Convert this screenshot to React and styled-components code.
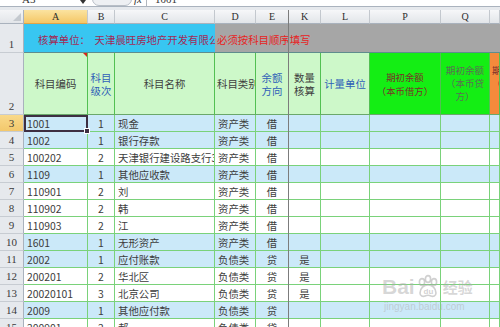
import React from 'react';
import styled, { createGlobalStyle, css } from 'styled-components';

const GlobalStyle = createGlobalStyle`
  html, body {
    margin: 0;
    padding: 0;
    background: #fff;
    overflow: hidden;
  }
  body {
    font-family: "Noto Sans CJK SC", "Liberation Sans", sans-serif;
  }
`;

const Page = styled.div`
  width: 500px;
  height: 327px;
  overflow: hidden;
  position: relative;
`;

const FormulaBar = styled.div`
  height: 6px;
  display: flex;
  align-items: flex-end;
  overflow: hidden;
  background: #fff;
  border-bottom: 1px solid #aab3be;
  font-size: 11px;
  color: #333;
`;

const NameBox = styled.div`
  width: 76px;
  padding-left: 22px;
  box-sizing: border-box;
  line-height: 13px;
  font-family: "Liberation Serif", serif;
`;

const DropArrow = styled.div`
  width: 0;
  height: 0;
  margin: 0 6px 2px 4px;
  border-left: 3px solid transparent;
  border-right: 3px solid transparent;
  border-top: 4px solid #333;
`;

const Knob = styled.div`
  width: 38px;
  height: 14px;
  border-radius: 7px;
  border: 1px solid #b8bec6;
  background: #eef0f3;
`;

const FxLabel = styled.div`
  width: 12px;
  padding-left: 2px;
  line-height: 13px;
  font-style: italic;
  font-family: "Liberation Serif", serif;
  border-right: 1px solid #b0b6be;
  margin-right: 8px;
`;

const FormulaText = styled.div`
  line-height: 13px;
  font-family: "Liberation Serif", serif;
`;

const Strip = styled.div`
  height: 3px;
  background: #e6e9ed;
`;

const Sheet = styled.div`
  position: relative;
  display: grid;
  grid-template-columns: 24px 64px 27px 100px 41px 33px 32px 49px 71px 49px 10px;
  grid-template-rows: 14px 29px 62px;
  grid-auto-rows: 17px;
  width: 500px;
`;

const Corner = styled.div`
  position: relative;
  box-sizing: border-box;
  background: linear-gradient(#f4f5f7, #e2e5e9);
  border-right: 1px solid #a9b2bd;
  border-bottom: 1px solid #a9b2bd;

  &::after {
    content: '';
    position: absolute;
    right: 2px;
    bottom: 2px;
    border-left: 8px solid transparent;
    border-bottom: 8px solid #c4c9cf;
  }
`;

const ColHead = styled.div`
  box-sizing: border-box;
  display: flex;
  align-items: center;
  justify-content: center;
  font-family: "Liberation Serif", serif;
  font-size: 10px;
  color: #2d2d2d;
  background: ${p => (p.$active ? 'linear-gradient(#fbe3a0, #f4c766)' : 'linear-gradient(#f6f7f9, #e2e5e9)')};
  border-right: 1px solid #c3c8ce;
  border-bottom: 1px solid ${p => (p.$active ? '#e0a448' : '#a9b2bd')};
`;

const RowHead = styled.div`
  box-sizing: border-box;
  display: flex;
  align-items: flex-end;
  justify-content: center;
  padding-bottom: 1px;
  line-height: 13px;
  font-family: "Liberation Serif", serif;
  font-size: 11px;
  color: #3a3a3a;
  background: ${p => (p.$active ? 'linear-gradient(#f9d98a, #f3c86c)' : '#e6e9ed')};
  border-right: 1px solid #a9b2bd;
  border-bottom: 1px solid #c7ccd2;
`;

const Banner = styled.div`
  grid-column: span ${p => p.$span};
  box-sizing: border-box;
  display: flex;
  align-items: center;
  padding: 2px 0 0 ${p => p.$pad}px;
  background: ${p => p.$bg};
  color: ${p => p.$color};
  font-size: 10.4px;
  white-space: pre;
  overflow: hidden;
  border-bottom: 1px solid #5f8d8d;
`;

const HeadCell = styled.div`
  position: relative;
  box-sizing: border-box;
  display: flex;
  align-items: center;
  justify-content: ${p => (p.$left ? 'flex-start' : 'center')};
  padding-left: ${p => (p.$left ? 2 : 0)}px;
  text-align: center;
  line-height: ${p => p.$lh || 13}px;
  font-size: ${p => p.$fs || 10.4}px;
  color: ${p => p.$color || '#404040'};
  background: ${p => p.$bg || '#cdf8c9'};
  border-right: 1px solid #52c052;
  border-bottom: 1px solid #6aa86a;
  white-space: nowrap;
  overflow: hidden;

  ${p => p.$note && css`
    &::after {
      content: '';
      position: absolute;
      top: 0;
      right: 0;
      border-left: 4px solid transparent;
      border-top: 4px solid #d8261c;
    }
  `}
`;

const Cell = styled.div`
  position: relative;
  box-sizing: border-box;
  display: flex;
  align-items: center;
  justify-content: ${p => (p.$center ? 'center' : 'flex-start')};
  padding-left: ${p => (p.$center ? 0 : 3)}px;
  font-size: 10.4px;
  color: #3c3c3c;
  background: ${p => (p.$blue ? '#cbe9f9' : '#fff')};
  border-right: 1px solid #7ad27a;
  border-bottom: 1px solid #7ad27a;
  white-space: nowrap;
  overflow: hidden;

  ${p => p.$selected && css`
    outline: 2px solid #3d2f42;
    outline-offset: -2px;
    overflow: visible;

    &::after {
      content: '';
      position: absolute;
      right: -3px;
      bottom: -3px;
      width: 4px;
      height: 4px;
      background: #3d2f42;
      border: 1px solid #fff;
      z-index: 2;
    }
  `}
`;

const FreezeLine = styled.div`
  position: absolute;
  top: 0;
  bottom: 0;
  left: 288px;
  width: 1px;
  background: #7c7c7c;
  z-index: 3;
`;

const Watermark = styled.div`
  position: absolute;
  left: 382px;
  top: 272px;
  display: flex;
  flex-direction: column;
  color: rgba(175, 175, 175, 0.5);
  z-index: 4;
  pointer-events: none;
`;

const MarkTop = styled.div`
  display: flex;
  align-items: center;
  font-family: "Liberation Sans", sans-serif;
  font-weight: bold;
  font-size: 21px;
  line-height: 30px;
`;

const MarkWord = styled.span`
  font-family: "Noto Sans CJK SC", sans-serif;
  font-size: 15px;
  font-weight: bold;
  margin-left: 2px;
`;

const MarkUrl = styled.div`
  font-family: "Liberation Sans", sans-serif;
  font-size: 10px;
  line-height: 10px;
  padding-left: 2px;
`;

const titles = ['A', 'B', 'C', 'D', 'E', 'K', 'L', 'P', 'Q', ''];

const rows = [
  { n: 3, code: '1001', lv: '1', name: '现金', type: '资产类', dir: '借', qty: '', blue: true },
  { n: 4, code: '1002', lv: '1', name: '银行存款', type: '资产类', dir: '借', qty: '', blue: true },
  { n: 5, code: '100202', lv: '2', name: '天津银行建设路支行3号', type: '资产类', dir: '借', qty: '' },
  { n: 6, code: '1109', lv: '1', name: '其他应收款', type: '资产类', dir: '借', qty: '', blue: true },
  { n: 7, code: '110901', lv: '2', name: '刘', type: '资产类', dir: '借', qty: '' },
  { n: 8, code: '110902', lv: '2', name: '韩', type: '资产类', dir: '借', qty: '' },
  { n: 9, code: '110903', lv: '2', name: '江', type: '资产类', dir: '借', qty: '' },
  { n: 10, code: '1601', lv: '1', name: '无形资产', type: '资产类', dir: '借', qty: '', blue: true },
  { n: 11, code: '2002', lv: '1', name: '应付账款', type: '负债类', dir: '贷', qty: '是', blue: true },
  { n: 12, code: '200201', lv: '2', name: '华北区', type: '负债类', dir: '贷', qty: '是' },
  { n: 13, code: '20020101', lv: '3', name: '北京公司', type: '负债类', dir: '贷', qty: '是' },
  { n: 14, code: '2009', lv: '1', name: '其他应付款', type: '负债类', dir: '贷', qty: '', blue: true },
  { n: 15, code: '200901', lv: '2', name: '郝', type: '负债类', dir: '贷', qty: '' },
];

const Paw = () => (
  <svg width="26" height="26" viewBox="0 0 26 26" fill="none" stroke="rgba(170,170,170,0.55)" strokeWidth="1.6">
    <ellipse cx="7" cy="8" rx="2.6" ry="3.4" />
    <ellipse cx="13" cy="5" rx="2.6" ry="3.4" />
    <ellipse cx="19" cy="8" rx="2.6" ry="3.4" />
    <path d="M5 19c0-5 4-8 8-8s8 3 8 8c0 3-3 4-5 3-2-1-4-1-6 0-2 1-5 0-5-3z" />
    <text x="8.5" y="20" fontSize="8" fontFamily="Liberation Sans" fontWeight="bold" fill="rgba(170,170,170,0.55)" stroke="none">du</text>
  </svg>
);

const App = () => (
  <Page>
    <GlobalStyle />
    <FormulaBar>
      <NameBox>A3</NameBox>
      <DropArrow />
      <Knob />
      <FxLabel>fx</FxLabel>
      <FormulaText>1001</FormulaText>
    </FormulaBar>
    <Strip />
    <Sheet>
      <FreezeLine />
      <Corner />
      {titles.map((t, i) => (
        <ColHead key={i} $active={t === 'A'}>{t}</ColHead>
      ))}

      <RowHead>1</RowHead>
      <Banner $span={3} $pad={14} $bg="#38c6f1" $color="#a12a56">
        {'核算单位：  天津晨旺房地产开发有限公司'}
      </Banner>
      <Banner $span={7} $pad={2} $bg="#a6a6a6" $color="#e8221e">
        必须按科目顺序填写
      </Banner>

      <RowHead>2</RowHead>
      <HeadCell $note>科目编码</HeadCell>
      <HeadCell $color="#2f5fb8">科目<br />级次</HeadCell>
      <HeadCell>科目名称</HeadCell>
      <HeadCell $left>科目类别</HeadCell>
      <HeadCell $color="#2f5fb8">余额<br />方向</HeadCell>
      <HeadCell>数量<br />核算</HeadCell>
      <HeadCell $color="#2f5fb8">计量单位</HeadCell>
      <HeadCell $bg="#14ee14" $color="#7a2f2a" $fs={9.4} $lh={14}>期初余额<br />（本币借方）</HeadCell>
      <HeadCell $bg="#14ee14" $color="#5b6e55" $fs={9.6} $lh={13}>期初余额<br />（本币贷<br />方）</HeadCell>
      <HeadCell $bg="#f48a3c" $color="#7a2f2a" $fs={9.4} $lh={13} $left>期初余额<br />（外币借<br />方）</HeadCell>

      {rows.map(r => (
        <React.Fragment key={r.n}>
          <RowHead $active={r.n === 3}>{r.n}</RowHead>
          <Cell $blue={r.blue} $selected={r.n === 3}>{r.code}</Cell>
          <Cell $blue={r.blue} $center>{r.lv}</Cell>
          <Cell $blue={r.blue}>{r.name}</Cell>
          <Cell $blue={r.blue}>{r.type}</Cell>
          <Cell $blue={r.blue} $center>{r.dir}</Cell>
          <Cell $blue={r.blue} $center>{r.qty}</Cell>
          <Cell $blue={r.blue} />
          <Cell $blue={r.blue} />
          <Cell $blue={r.blue} />
          <Cell $blue={r.blue} />
        </React.Fragment>
      ))}
    </Sheet>
    <Watermark>
      <MarkTop>
        Bai
        <Paw />
        <MarkWord>经验</MarkWord>
      </MarkTop>
      <MarkUrl>jingyan.baidu.com</MarkUrl>
    </Watermark>
  </Page>
);

export default App;
